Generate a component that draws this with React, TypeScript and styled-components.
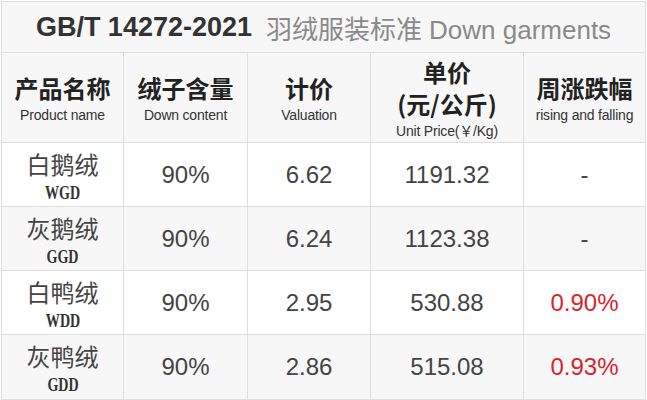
import React from 'react'
import styled, { createGlobalStyle } from 'styled-components'

const CJK = `"Noto Sans CJK SC", sans-serif`
const LATIN = `"Liberation Sans", Arial, "Noto Sans CJK SC", sans-serif`

const GlobalStyle = createGlobalStyle`
  html, body {
    margin: 0;
    padding: 0;
    background: #ffffff;
  }
  body {
    font-family: ${LATIN};
  }
`

const Table = styled.div`
  display: grid;
  grid-template-columns: 121px 123px 122px 152px 121px;
  grid-template-rows: 50px 89px 63px 63px 63px 64px;
  gap: 1px;
  padding: 1px;
  width: 645px;
  box-sizing: border-box;
  margin: 1px 0 0 1px;
  background: #dedede;
`

const TitleCell = styled.div`
  grid-column: 1 / -1;
  background: #f7f7f7;
  display: flex;
  align-items: center;
  justify-content: center;
  white-space: nowrap;
`

const TitleCode = styled.span`
  font-family: ${LATIN};
  font-weight: bold;
  font-size: 27px;
  color: #333333;
`

const TitleName = styled.span`
  margin-left: 14px;
  font-family: ${LATIN};
  font-size: 26px;
  color: #8a8a8a;

  & > em {
    font-style: normal;
    font-family: ${CJK};
    margin-right: 7px;
  }
`

const Cell = styled.div<{ $shade?: boolean; $name?: boolean }>`
  background: ${({ $shade }) => ($shade ? '#f7f7f7' : '#ffffff')};
  display: flex;
  flex-direction: column;
  align-items: center;
  justify-content: center;
  text-align: center;
  white-space: nowrap;
  padding-top: ${({ $name }) => ($name ? '2px' : '0')};
`

const HeadZh = styled.div`
  font-family: ${CJK};
  font-weight: bold;
  font-size: 24px;
  line-height: 32px;
  color: #222222;
`

const HeadEn = styled.div`
  font-family: ${LATIN};
  font-size: 14px;
  line-height: 18px;
  letter-spacing: -0.2px;
  color: #333333;
  margin-top: 2px;
`

const NameZh = styled.div`
  font-family: ${CJK};
  font-size: 24px;
  line-height: 30px;
  color: #444444;
`

const NameCode = styled.div`
  font-family: "Liberation Serif", "Times New Roman", serif;
  font-weight: bold;
  font-size: 18px;
  line-height: 20px;
  color: #333333;
  margin-top: 4px;
  transform: scaleX(0.78);
`

const Value = styled.div<{ $up?: boolean }>`
  font-family: ${LATIN};
  font-size: 24px;
  line-height: 28px;
  color: ${({ $up }) => ($up ? '#d9232d' : '#444444')};
`

interface Item {
  name: string
  code: string
  content: string
  valuation: string
  price: string
  change: string
}

const items: Item[] = [
  { name: '白鹅绒', code: 'WGD', content: '90%', valuation: '6.62', price: '1191.32', change: '-' },
  { name: '灰鹅绒', code: 'GGD', content: '90%', valuation: '6.24', price: '1123.38', change: '-' },
  { name: '白鸭绒', code: 'WDD', content: '90%', valuation: '2.95', price: '530.88', change: '0.90%' },
  { name: '灰鸭绒', code: 'GDD', content: '90%', valuation: '2.86', price: '515.08', change: '0.93%' },
]

const App = () => (
  <>
    <GlobalStyle />
    <Table>
      <TitleCell>
        <TitleCode>GB/T 14272-2021</TitleCode>
        <TitleName>
          <em>羽绒服装标准</em>Down garments
        </TitleName>
      </TitleCell>

      <Cell $shade>
        <HeadZh>产品名称</HeadZh>
        <HeadEn>Product name</HeadEn>
      </Cell>
      <Cell $shade>
        <HeadZh>绒子含量</HeadZh>
        <HeadEn>Down content</HeadEn>
      </Cell>
      <Cell $shade>
        <HeadZh>计价</HeadZh>
        <HeadEn>Valuation</HeadEn>
      </Cell>
      <Cell $shade>
        <HeadZh>单价</HeadZh>
        <HeadZh>(元/公斤)</HeadZh>
        <HeadEn>Unit Price(￥/Kg)</HeadEn>
      </Cell>
      <Cell $shade>
        <HeadZh>周涨跌幅</HeadZh>
        <HeadEn>rising and falling</HeadEn>
      </Cell>

      {items.map((item, i) => {
        const shade = i % 2 === 1
        const up = item.change !== '-'
        return (
          <React.Fragment key={item.code}>
            <Cell $shade={shade} $name>
              <NameZh>{item.name}</NameZh>
              <NameCode>{item.code}</NameCode>
            </Cell>
            <Cell $shade={shade}>
              <Value>{item.content}</Value>
            </Cell>
            <Cell $shade={shade}>
              <Value>{item.valuation}</Value>
            </Cell>
            <Cell $shade={shade}>
              <Value>{item.price}</Value>
            </Cell>
            <Cell $shade={shade}>
              <Value $up={up}>{item.change}</Value>
            </Cell>
          </React.Fragment>
        )
      })}
    </Table>
  </>
)

export default App
